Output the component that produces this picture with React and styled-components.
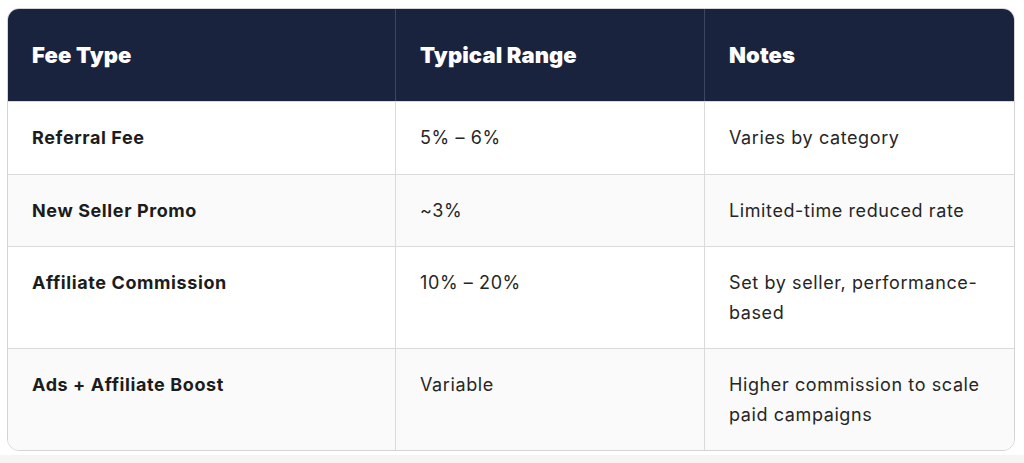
import React from 'react';
import styled, {createGlobalStyle} from "styled-components";

const GlobalStyle = createGlobalStyle`
  html, body {
    margin: 0;
    padding: 0;
    background: #ffffff;
  }
  body {
    font-family: Inter, "Noto Sans", sans-serif;
  }
`

const Page = styled.div`
  width: 1024px;
  height: 463px;
  display: flex;
  flex-direction: column;
  background: #ffffff;
`

const Wrapper = styled.div`
  padding: 8px 9px 0 7px;
`

const Table = styled.div`
  display: grid;
  grid-template-columns: 387px 309px 1fr;
  border: 1px solid #d4d4d4;
  border-radius: 12px;
  overflow: hidden;
  background: #ffffff;
`

const HeadCell = styled.div`
  background: #1a233e;
  color: #ffffff;
  font-family: Inter, sans-serif;
  font-weight: 900;
  font-size: 22px;
  letter-spacing: 0.1px;
  line-height: 28px;
  padding: 32px 24px 32px 24px;
  border-left: ${p => p.$first ? "none" : "1px solid #3d4660"};
`

const Cell = styled.div`
  background: ${p => p.$alt ? "#fafafa" : "#ffffff"};
  color: ${p => p.$bold ? "#1c1c1c" : "#262626"};
  font-weight: ${p => p.$bold ? 700 : 400};
  font-size: 18px;
  line-height: 29.5px;
  letter-spacing: 0.6px;
  padding: 21px 24px;
  border-top: 1px solid #dadada;
  border-left: ${p => p.$first ? "none" : "1px solid #dadada"};
`

const BottomStrip = styled.div`
  margin-top: auto;
  height: 8px;
  background: #f5f5f3;
`

const rows = [
    ["Referral Fee", "5% – 6%", "Varies by category"],
    ["New Seller Promo", "~3%", "Limited-time reduced rate"],
    ["Affiliate Commission", "10% – 20%", "Set by seller, performance-based"],
    ["Ads + Affiliate Boost", "Variable", "Higher commission to scale paid campaigns"],
];

function App() {
    return (
        <Page>
            <GlobalStyle/>
            <Wrapper>
                <Table>
                    <HeadCell $first>Fee Type</HeadCell>
                    <HeadCell>Typical Range</HeadCell>
                    <HeadCell>Notes</HeadCell>
                    {rows.map((row, i) => (
                        <React.Fragment key={row[0]}>
                            <Cell $first $bold $alt={i % 2 === 1}>{row[0]}</Cell>
                            <Cell $alt={i % 2 === 1}>{row[1]}</Cell>
                            <Cell $alt={i % 2 === 1}>{row[2]}</Cell>
                        </React.Fragment>
                    ))}
                </Table>
            </Wrapper>
            <BottomStrip/>
        </Page>
    );
}

export default App;
